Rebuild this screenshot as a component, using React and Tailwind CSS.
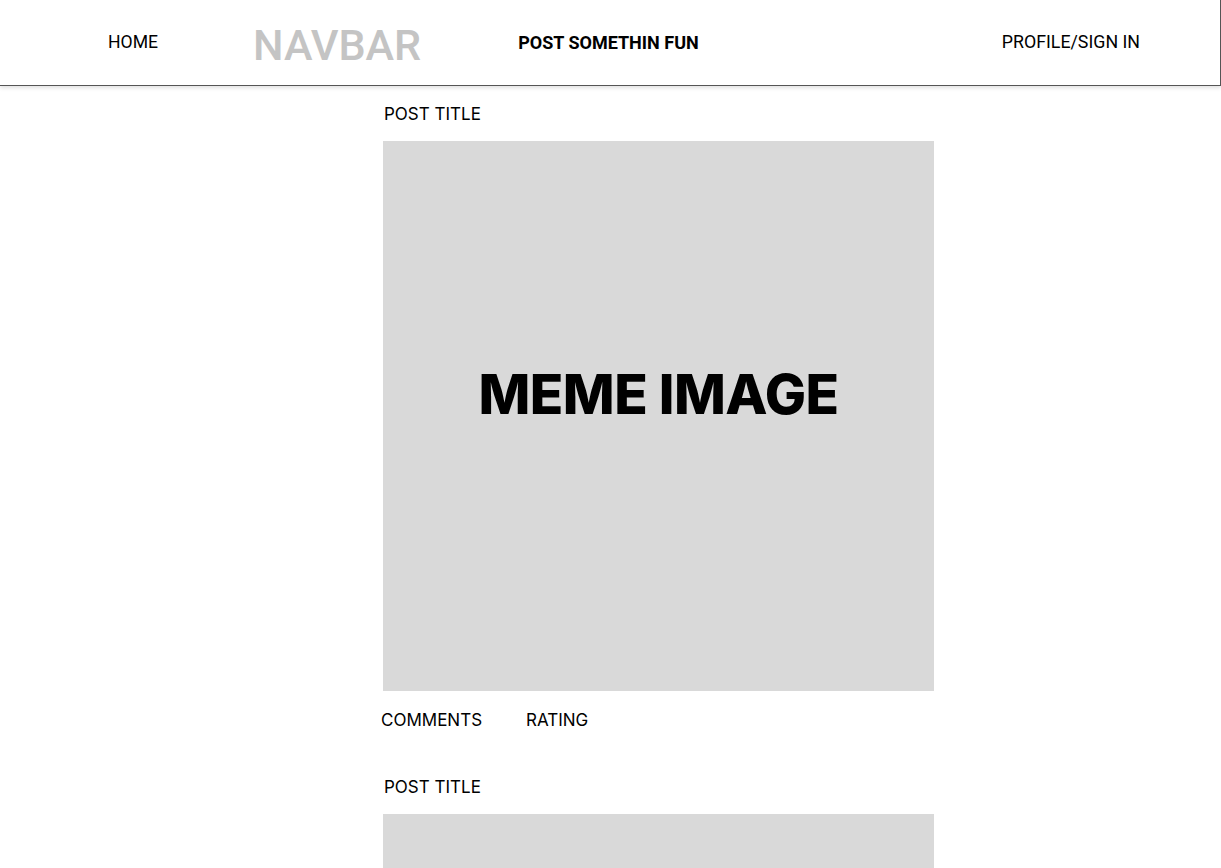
import React from "react";

const posts = [{ id: 1 }, { id: 2 }];

function Post() {
  return (
    <div className="flex flex-col">
      <div className="pl-px text-[17px] leading-[22px] text-black">POST TITLE</div>
      <div className="mt-[16px] w-[551px] h-[550px] bg-[#d9d9d9] flex items-center justify-center pb-[43px]">
        <span className="text-[55px] font-extrabold tracking-[-0.5px] text-black leading-none">MEME IMAGE</span>
      </div>
      <div className="mt-[18px] flex text-[17px] leading-[22px] text-black -ml-[2px]">
        <span>COMMENTS</span>
        <span className="ml-[44px]">RATING</span>
      </div>
    </div>
  );
}

export default function App() {
  return (
    <div className="min-h-screen bg-white font-['Inter',sans-serif]">
      <nav className="h-[86px] w-[1221px] border-b border-r border-[#555] shadow-[0_2px_4px_rgba(0,0,0,0.12)] flex items-center font-['Roboto',sans-serif] text-black">
        <span className="ml-[108px] text-[17.6px]">HOME</span>
        <span className="ml-[95px] mt-[6px] text-[43px] font-medium text-[#c4c4c4] leading-none">NAVBAR</span>
        <span className="ml-[97px] text-[18px] font-bold">POST SOMETHIN FUN</span>
        <span className="ml-auto mr-[80px] text-[17.8px]">PROFILE/SIGN IN</span>
      </nav>
      <main className="ml-[383px] pt-[17px] flex flex-col gap-[45px]">
        {posts.map((p) => (
          <Post key={p.id} />
        ))}
      </main>
    </div>
  );
}
